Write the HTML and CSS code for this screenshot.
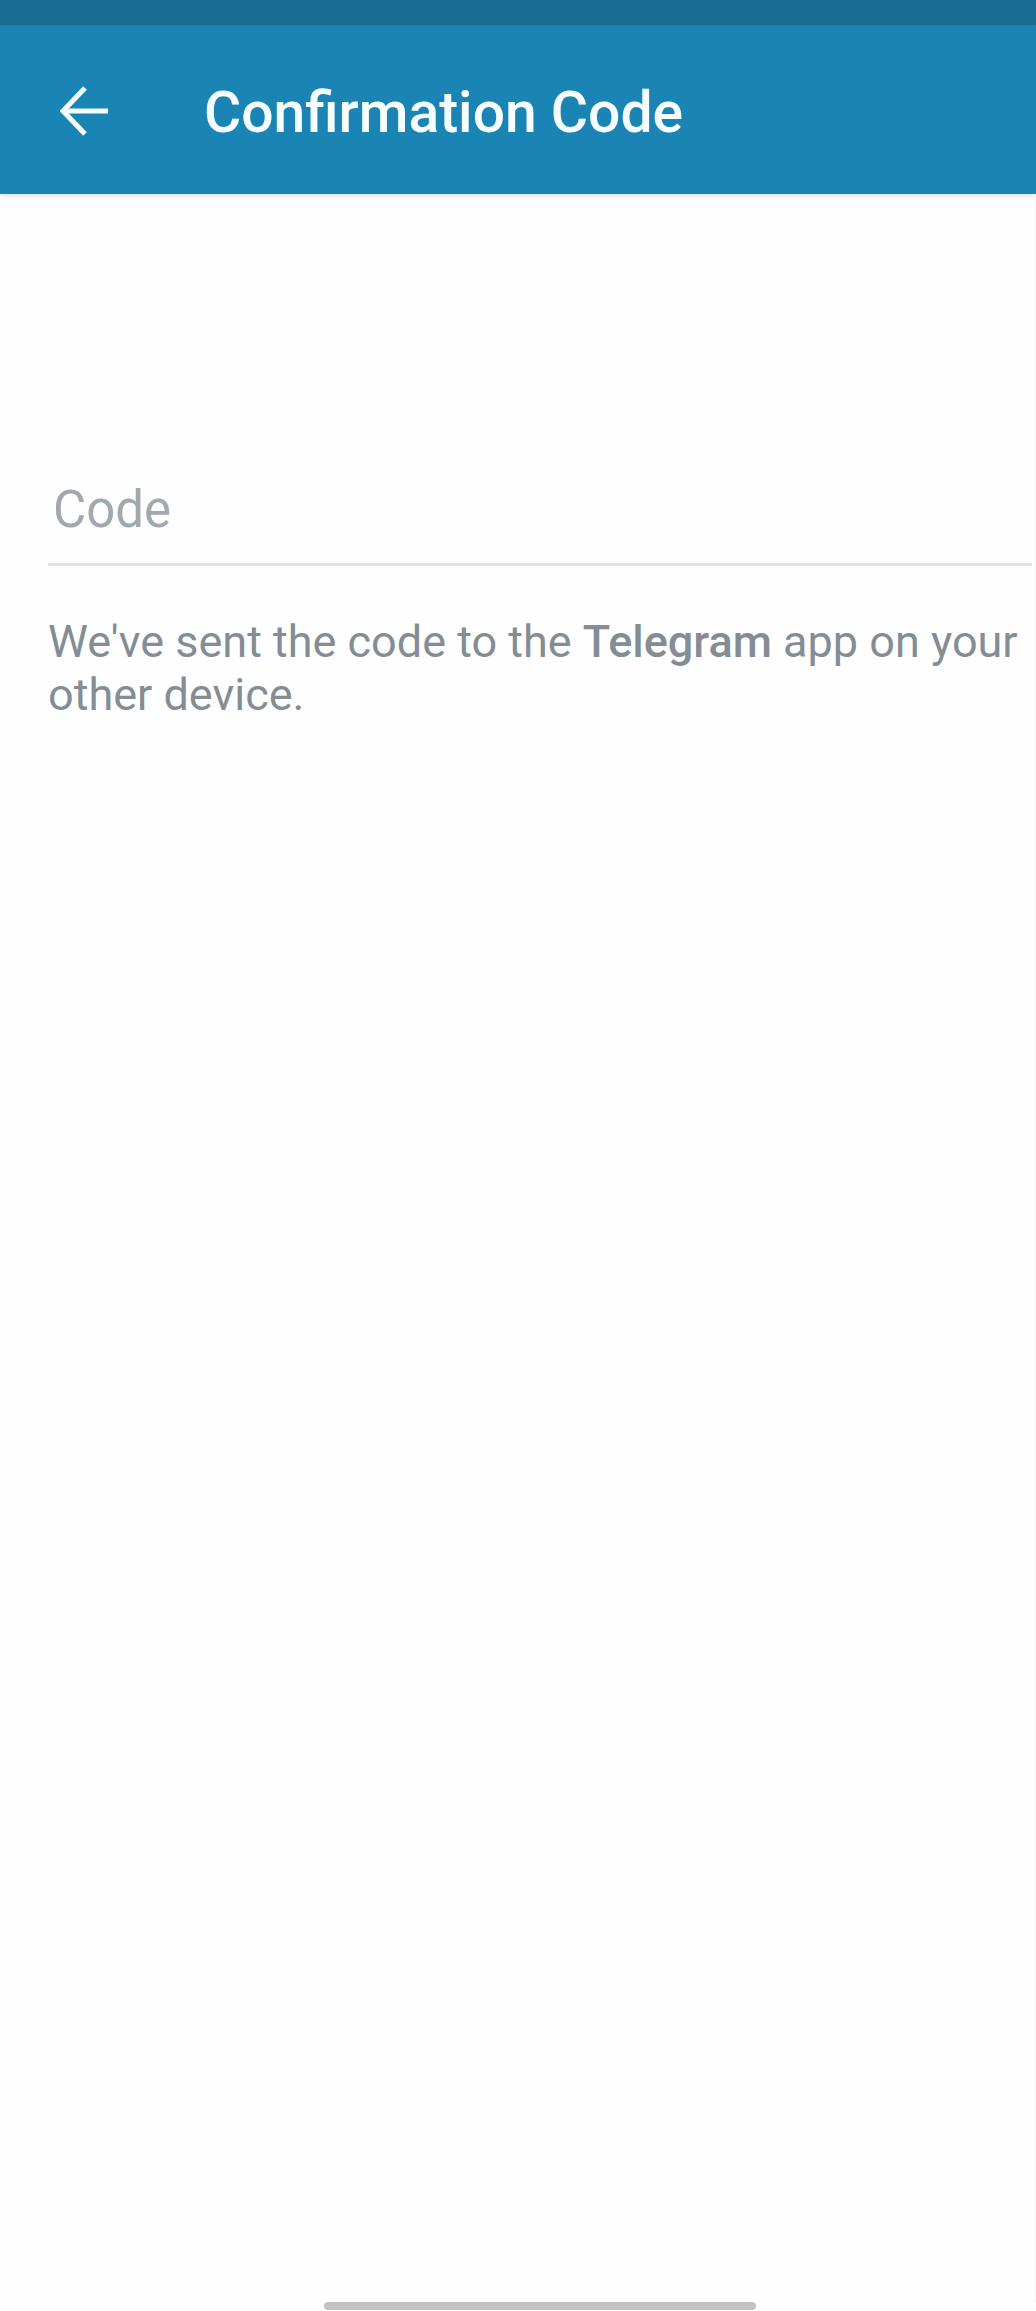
FILE: index.html
```html
<!DOCTYPE html>
<html lang="en">
<head>
    <meta charset="UTF-8">
    <meta name="viewport" content="width=device-width, initial-scale=1.0">
    <title>Confirmation Code</title>
    <link rel="stylesheet" href="styles.css">
</head>
<body>

<div class="status-bar"></div>

<header class="toolbar">
    <button class="back-button" type="button" aria-label="Back">
        <svg width="50" height="52" viewBox="0 0 50 52" fill="none" stroke="currentColor" stroke-width="5">
            <path d="M48 26H5"/>
            <path d="M25 3L3 26L25 49"/>
        </svg>
    </button>
    <h1 class="title">Confirmation Code</h1>
</header>

<main class="content">
    <form class="code-form">
        <input class="code-input" type="text" inputmode="numeric" placeholder="Code" aria-label="Code">
        <p class="hint">We've sent the code to the <strong>Telegram</strong> app on your other device.</p>
    </form>
</main>

<footer class="nav-bar">
    <div class="home-handle"></div>
</footer>

</body>
</html>
```

FILE: styles.css
```css
* {
    box-sizing: border-box;
}

body {
    display: flex;
    flex-direction: column;
    min-height: 100vh;
    margin: 0;
    font-family: Roboto, "Liberation Sans", sans-serif;
    background-color: #fefefe;
}

.status-bar {
    height: 25px;
    background-color: #1a6d92;
}

.toolbar {
    display: flex;
    align-items: center;
    gap: 60px;
    height: 169px;
    padding: 6px 24px 0;
    background-color: #1a85b5;
    color: #f7feff;
    box-shadow: 0 2px 5px rgba(0, 0, 0, 0.12);
}

.back-button {
    display: flex;
    padding: 32px 34px 36px 36px;
    border: none;
    background: none;
    color: inherit;
    cursor: pointer;
}

.title {
    margin: 0;
    font-size: 57px;
    font-weight: 500;
    line-height: 68px;
}

.content {
    flex: 1;
    padding: 269px 3px 0 48px;
    border-right: 1px solid #f3f3f3;
}

.code-input {
    display: block;
    width: 100%;
    height: 103px;
    padding: 0 5px 8px;
    border: none;
    border-bottom: 3px solid #e3e3e3;
    outline: none;
    background: none;
    font-family: inherit;
    font-size: 51px;
    color: #212121;
}

.code-input::placeholder {
    color: #a0a9b0;
    opacity: 1;
}

.hint {
    margin: 49px 0 0;
    font-size: 45px;
    line-height: 53px;
    color: #848d95;
}

.hint strong {
    font-weight: 500;
}

.nav-bar {
    padding: 0 280px 1px 324px;
}

.home-handle {
    height: 8px;
    border-radius: 4px;
    background-color: #c3c3c3;
}
```
